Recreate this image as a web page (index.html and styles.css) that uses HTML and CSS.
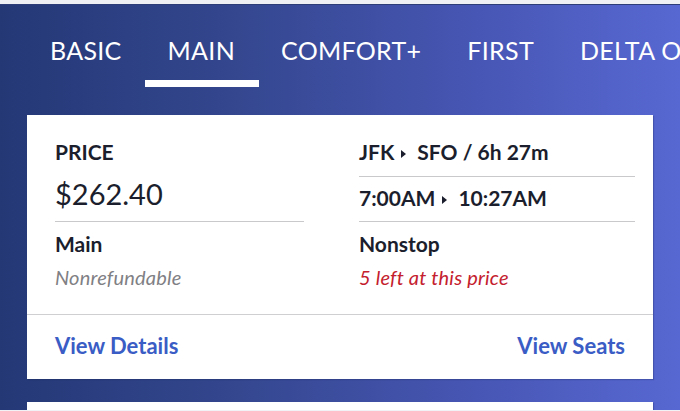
FILE: index.html
```html
<!DOCTYPE html>
<html lang="en">
<head>
<meta charset="utf-8">
<title>Fare options</title>
<link rel="stylesheet" href="styles.css">
</head>
<body>
<div class="topstrip"></div>
<main class="page">
  <nav class="tabs">
    <div class="tab">BASIC</div>
    <div class="tab active">MAIN</div>
    <div class="tab">COMFORT+</div>
    <div class="tab">FIRST</div>
    <div class="tab">DELTA ONE</div>
  </nav>

  <section class="card">
    <div class="card-body">
      <div class="col">
        <div class="label">PRICE</div>
        <div class="price divided">$262.40</div>
        <div class="label fare">Main</div>
        <div class="note">Nonrefundable</div>
      </div>
      <div class="col">
        <div class="label divided route">JFK<svg class="arrow" width="5" height="8" viewBox="0 0 5 8"><path d="M0 0 L5 4 L0 8 Z"/></svg>SFO / 6h 27m</div>
        <div class="label divided times">7:00AM<svg class="arrow" width="5" height="8" viewBox="0 0 5 8"><path d="M0 0 L5 4 L0 8 Z"/></svg>10:27AM</div>
        <div class="label fare">Nonstop</div>
        <div class="note alert">5 left at this price</div>
      </div>
    </div>
    <div class="card-foot">
      <a class="link">View Details</a>
      <a class="link">View Seats</a>
    </div>
  </section>

  <section class="card next"></section>
</main>
</body>
</html>
```

FILE: styles.css
```css
* { box-sizing: border-box; }

html, body {
  margin: 0;
  padding: 0;
  height: 100%;
  overflow: hidden;
}

body {
  font-family: "Lato", "Open Sans", sans-serif;
  color: #1b1e2c;
  background: #f1f2f5;
}

.topstrip {
  height: 5px;
  background: #eef0f4;
  border-bottom: 1px solid #2c3d78;
}

.page {
  height: 405px;
  overflow: hidden;
  background: linear-gradient(90deg, #243876 0%, #34478f 35%, #4756b4 70%, #5768d2 100%);
  padding: 30px 27px 0;
}

.tabs {
  display: flex;
  white-space: nowrap;
}

.tab {
  flex: none;
  padding: 0 23px;
  font-size: 25px;
  line-height: 30px;
  color: #ffffff;
  letter-spacing: 0.3px;
}

.tab::after {
  content: "";
  display: block;
  height: 7px;
  margin: 15px -24px 0 -23px;
  background: transparent;
}

.tab.active::after {
  background: #ffffff;
}

.card {
  background: #ffffff;
  margin-top: 28px;
  box-shadow: 1px 1px 1px rgba(20, 30, 80, 0.25);
}

.card-body {
  display: grid;
  grid-template-columns: 249px 1fr;
  column-gap: 55px;
  padding: 25px 18px 25px 28px;
}

.col {
  display: flex;
  flex-direction: column;
}

.label {
  font-size: 21px;
  line-height: 24px;
  font-weight: 700;
  color: #1b1e2c;
}

.price {
  font-size: 29px;
  line-height: 36px;
  font-weight: 400;
  margin-top: 12px;
  padding-bottom: 9px;
}

.divided {
  border-bottom: 1px solid #c9c9cc;
}

.route {
  padding-bottom: 12px;
}

.times {
  margin-top: 9px;
  padding-bottom: 11px;
}

.arrow {
  fill: #1b1e2c;
  margin: 0 11px 1px 7px;
  vertical-align: middle;
}

.fare {
  margin-top: 10px;
}

.note {
  margin-top: 9px;
  font-size: 20px;
  line-height: 24px;
  font-style: italic;
  color: #7f8084;
  letter-spacing: 0.2px;
}

.note.alert {
  color: #c4202e;
}

.card-foot {
  display: flex;
  justify-content: space-between;
  border-top: 1px solid #cfcfd2;
  padding: 18px 28px 20px;
}

.link {
  font-size: 22px;
  line-height: 26px;
  font-weight: 700;
  color: #3a5cc5;
  text-decoration: none;
}

.card.next {
  margin-top: 23px;
  height: 40px;
}
```
